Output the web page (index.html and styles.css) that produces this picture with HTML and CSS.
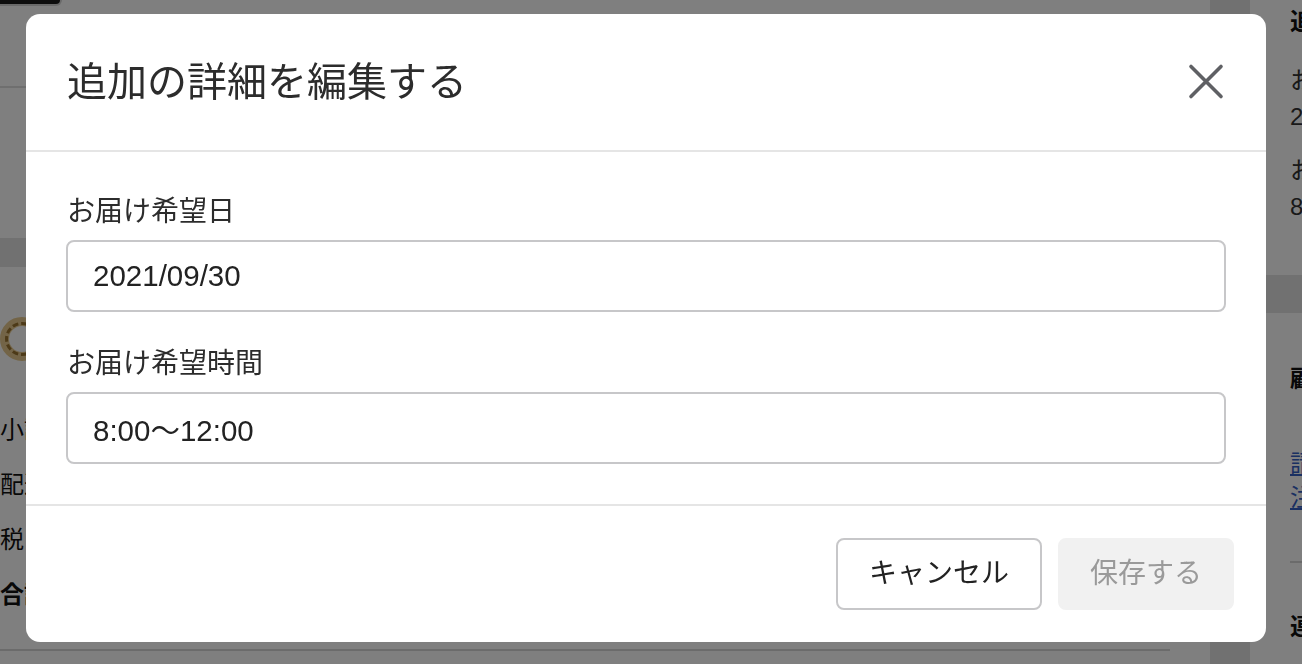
FILE: index.html
```html
<!DOCTYPE html>
<html lang="ja">
<head>
<meta charset="utf-8">
<title>追加の詳細を編集する</title>
<link rel="stylesheet" href="styles.css">
</head>
<body>
<div class="page">
  <main class="main">
    <section class="card card-top">
      <div class="thumb"></div>
      <div class="rule"></div>
    </section>
    <section class="card card-summary">
      <div class="ring"></div>
      <div class="rows">
        <div class="row">小計</div>
        <div class="row">配送</div>
        <div class="row">税</div>
        <div class="row row-total">合計</div>
      </div>
      <div class="summary-rule"></div>
    </section>
  </main>
  <aside class="aside">
    <section class="acard acard-a">
      <h3 class="a-head">追加の詳細</h3>
      <div class="a-group">
        <div class="a-line">お届け希望日</div>
        <div class="a-line">2021/09/30</div>
      </div>
      <div class="a-group">
        <div class="a-line">お届け希望時間</div>
        <div class="a-line">8:00〜12:00</div>
      </div>
    </section>
    <section class="acard acard-b">
      <h3 class="a-head b-head">顧客</h3>
      <div class="a-links">
        <a class="a-link">請求書を表示</a>
        <a class="a-link">注文を表示</a>
      </div>
      <div class="a-rule"></div>
      <h3 class="a-head c-head">連絡先情報</h3>
    </section>
  </aside>
</div>

<div class="overlay"></div>

<div class="modal" role="dialog" aria-labelledby="modal-title">
  <header class="modal-header">
    <h2 id="modal-title" class="modal-title">追加の詳細を編集する</h2>
    <button class="close-btn" aria-label="閉じる">
      <svg width="40" height="40" viewBox="0 0 40 40" aria-hidden="true">
        <path d="M5 4.5 L35 34.5 M35 4.5 L5 34.5" stroke="#5f6064" stroke-width="3.6" stroke-linecap="round" fill="none"/>
      </svg>
    </button>
  </header>
  <div class="modal-body">
    <div class="field">
      <label class="field-label">お届け希望日</label>
      <div class="field-input">2021/09/30</div>
    </div>
    <div class="field">
      <label class="field-label">お届け希望時間</label>
      <div class="field-input">8:00〜12:00</div>
    </div>
  </div>
  <footer class="modal-footer">
    <button class="btn btn-cancel">キャンセル</button>
    <button class="btn btn-save" disabled>保存する</button>
  </footer>
</div>
</body>
</html>
```

FILE: styles.css
```css
* { box-sizing: border-box; }
html, body { margin: 0; height: 100%; }
body {
  font-family: "Liberation Sans", "Noto Sans CJK JP", sans-serif;
  background: #e2e2e2;
  color: #222;
  overflow: hidden;
}

/* background page */
.page { display: flex; gap: 40px; height: 100vh; }
.main { width: 1210px; flex: none; display: flex; flex-direction: column; gap: 29px; }
.card { background: #fff; }
.card-top { height: 238px; }
.thumb {
  width: 62px; height: 6px; background: #1c1c1c;
  border-right: 2px solid #d4d4d4; border-bottom: 2px solid #d4d4d4;
  border-bottom-right-radius: 8px;
}
.rule { height: 2px; background: #dedede; margin-top: 80px; }
.card-summary { flex: 1; padding-top: 50px; display: flex; flex-direction: column; }
.ring {
  width: 44px; height: 44px; border-radius: 50%;
  border: 9px solid #e6c98e; position: relative;
}
.ring::after {
  content: ""; position: absolute; inset: -4px; border-radius: 50%;
  border: 3px dashed #9a7430;
}
.rows { margin-top: 49px; display: flex; flex-direction: column; gap: 15px; }
.row { font-size: 24px; line-height: 40px; color: #111; }
.row-total { font-weight: bold; }
.summary-rule { height: 2px; background: #d6d6d6; margin-top: 34px; margin-right: 40px; }

.aside { flex: 1; display: flex; flex-direction: column; gap: 38px; }
.acard { background: #fff; padding-left: 40px; white-space: nowrap; overflow: hidden; }
.acard-a { height: 275px; padding-top: 8px; }
.a-head { margin: 0; font-size: 24px; line-height: 28px; font-weight: bold; color: #111; }
.a-group { margin-top: 27px; }
.a-group + .a-group { margin-top: 18px; }
.a-line { font-size: 24px; line-height: 36px; color: #333; }
.acard-b { flex: 1; padding-top: 48px; }
.b-head { line-height: 36px; }
.a-links { margin-top: 50px; display: flex; flex-direction: column; }
.a-link { font-size: 24px; line-height: 34px; color: #3560c4; text-decoration: underline; }
.a-rule { height: 2px; background: #d6d6d6; margin-top: 46px; }
.c-head { margin-top: 46px; line-height: 36px; }

.overlay { position: fixed; inset: 0; background: rgba(0, 0, 0, 0.5); }

/* modal */
.modal {
  position: fixed; left: 26px; top: 14px; width: 1240px;
  background: #fff; border-radius: 14px; overflow: hidden;
  font-family: "Liberation Sans", "Noto Sans CJK JP", sans-serif;
}
.modal-header {
  display: flex; align-items: center; justify-content: space-between;
  padding: 40px 40px 40px 41px; border-bottom: 2px solid #e5e5e5;
}
.modal-title { margin: 0; font-size: 40px; line-height: 56px; font-weight: normal; color: #2c2c2c; }
.close-btn {
  width: 40px; height: 40px; padding: 0; border: 0; background: none;
  display: flex; align-items: center; justify-content: center; cursor: pointer;
}
.modal-body {
  padding: 40px; border-bottom: 2px solid #e5e5e5;
  display: flex; flex-direction: column; gap: 32px;
}
.field { display: flex; flex-direction: column; gap: 8px; }
.field-label { font-size: 28px; line-height: 40px; color: #2c2c2c; padding-left: 1px; }
.field-input {
  height: 72px; border: 2px solid #c7c7c9; border-radius: 8px;
  padding: 0 25px; display: flex; align-items: center;
  font-size: 29.5px; color: #222;
}
.modal-footer {
  padding: 32px; display: flex; justify-content: flex-end; gap: 16px;
}
.btn {
  height: 72px; padding: 0 30px; border-radius: 8px;
  font-family: inherit; font-size: 28px; line-height: 1;
}
.btn-cancel { background: #fff; border: 2px solid #c7c7c9; color: #222; padding: 0 31px; }
.btn-save { background: #f1f1f1; border: 2px solid #f1f1f1; color: #9a9a9a; }
```
